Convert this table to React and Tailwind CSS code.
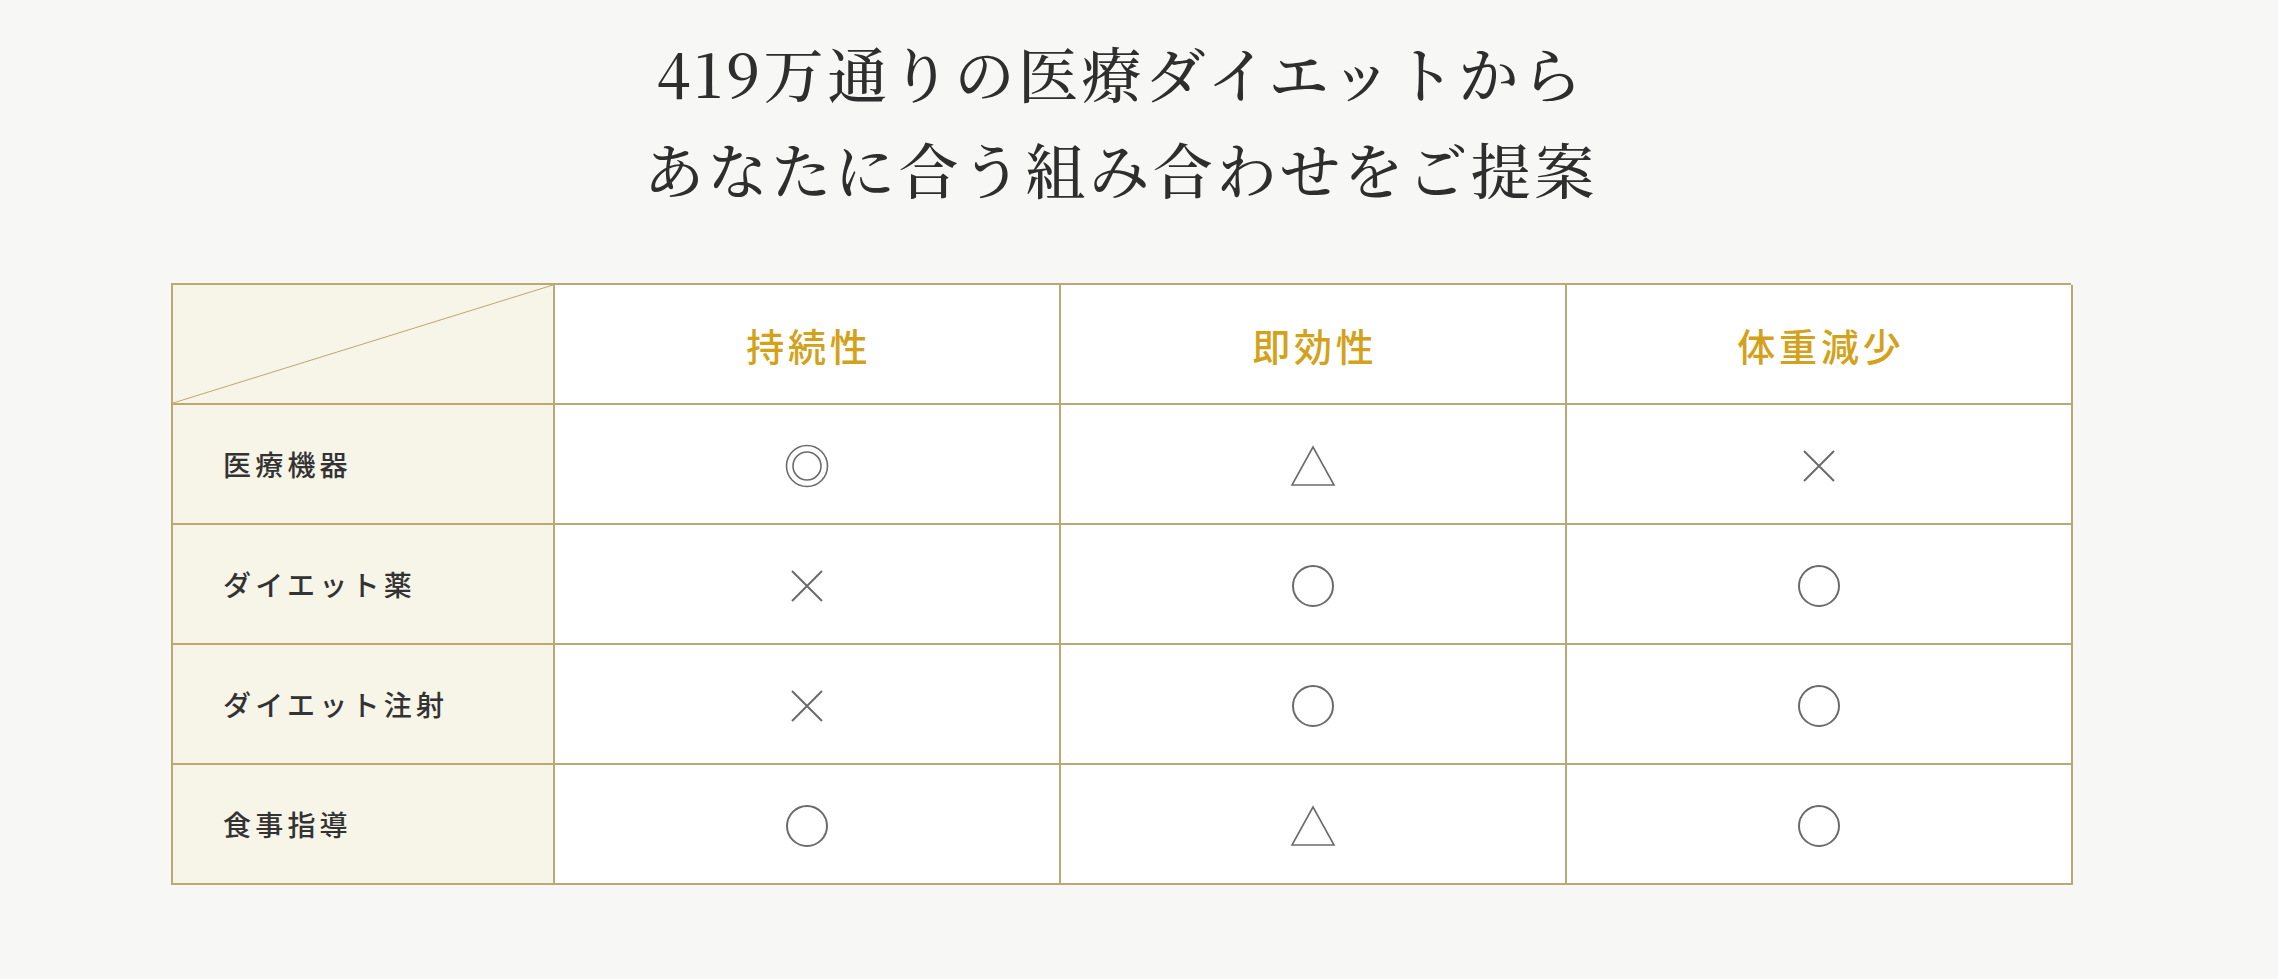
import React from 'react';

const GOLD_LINE = '#bba874';

const Circle = () => (
    <svg width="44" height="44" viewBox="0 0 44 44" fill="none">
        <circle cx="22" cy="22" r="20" stroke="#6b6b6b" strokeWidth="2" />
    </svg>
);

const DoubleCircle = () => (
    <svg width="44" height="44" viewBox="0 0 44 44" fill="none">
        <circle cx="22" cy="22" r="20.5" stroke="#6b6b6b" strokeWidth="1.6" />
        <circle cx="22" cy="22" r="14" stroke="#6b6b6b" strokeWidth="1.6" />
    </svg>
);

const Triangle = () => (
    <svg width="46" height="42" viewBox="0 0 46 42" fill="none">
        <path d="M23 2 L44 40 L2 40 Z" stroke="#6b6b6b" strokeWidth="1.6" strokeLinejoin="miter" />
    </svg>
);

const Cross = () => (
    <svg width="32" height="32" viewBox="0 0 32 32" fill="none">
        <path d="M1 1 L31 31 M31 1 L1 31" stroke="#6b6b6b" strokeWidth="2" />
    </svg>
);

const MARKS = { o: Circle, oo: DoubleCircle, t: Triangle, x: Cross };

const headers = ['持続性', '即効性', '体重減少'];

const rows = [
    { label: '医療機器', marks: ['oo', 't', 'x'] },
    { label: 'ダイエット薬', marks: ['x', 'o', 'o'] },
    { label: 'ダイエット注射', marks: ['x', 'o', 'o'] },
    { label: '食事指導', marks: ['o', 't', 'o'] },
];

const sans = "font-['Noto_Sans_CJK_JP','Noto_Sans',sans-serif]";

const App = () => {
    return (
        <div className="min-h-[979px] bg-[#f7f7f5] pt-[24px]">
            <div className="ml-[171px] w-[1900px]">
                {/* Title */}
                <h2 className="text-center text-[60px] leading-[96px] tracking-[0.06em] text-[#2e2e2e] font-medium font-['Noto_Serif_CJK_JP','Liberation_Serif','Noto_Sans_CJK_JP',serif]">
                    419万通りの医療ダイエットから
                    <br />
                    あなたに合う組み合わせをご提案
                </h2>

                {/* Comparison table */}
                <div className={`mt-[67px] grid grid-cols-[382px_506px_506px_506px] border-l-2 border-t-2 border-[#bba874] ${sans}`}>
                    <div className="relative h-[120px] border-r-2 border-b-2 border-[#bba874] bg-[#f7f4e8]">
                        <svg className="absolute inset-0 h-full w-full" viewBox="0 0 100 100" preserveAspectRatio="none">
                            <line x1="0" y1="100" x2="100" y2="0" stroke={GOLD_LINE} strokeWidth="1" vectorEffect="non-scaling-stroke" />
                        </svg>
                    </div>
                    {headers.map((h) => (
                        <div key={h} className="flex h-[120px] items-center justify-center border-r-2 border-b-2 border-[#bba874] bg-white">
                            <span className="pl-[0.1em] text-[38px] font-medium tracking-[0.1em] text-[#d4a11a]">{h}</span>
                        </div>
                    ))}

                    {rows.map((r) => (
                        <React.Fragment key={r.label}>
                            <div className="flex h-[120px] items-center border-r-2 border-b-2 border-[#bba874] bg-[#f7f4e8] pl-[50px]">
                                <span className="text-[28px] font-medium tracking-[0.15em] text-[#333333]">{r.label}</span>
                            </div>
                            {r.marks.map((m, i) => {
                                const Mark = MARKS[m];
                                return (
                                    <div key={i} className="flex h-[120px] items-center justify-center border-r-2 border-b-2 border-[#bba874] bg-white pt-[4px]">
                                        <Mark />
                                    </div>
                                );
                            })}
                        </React.Fragment>
                    ))}
                </div>
            </div>
        </div>
    );
};

export default App;
